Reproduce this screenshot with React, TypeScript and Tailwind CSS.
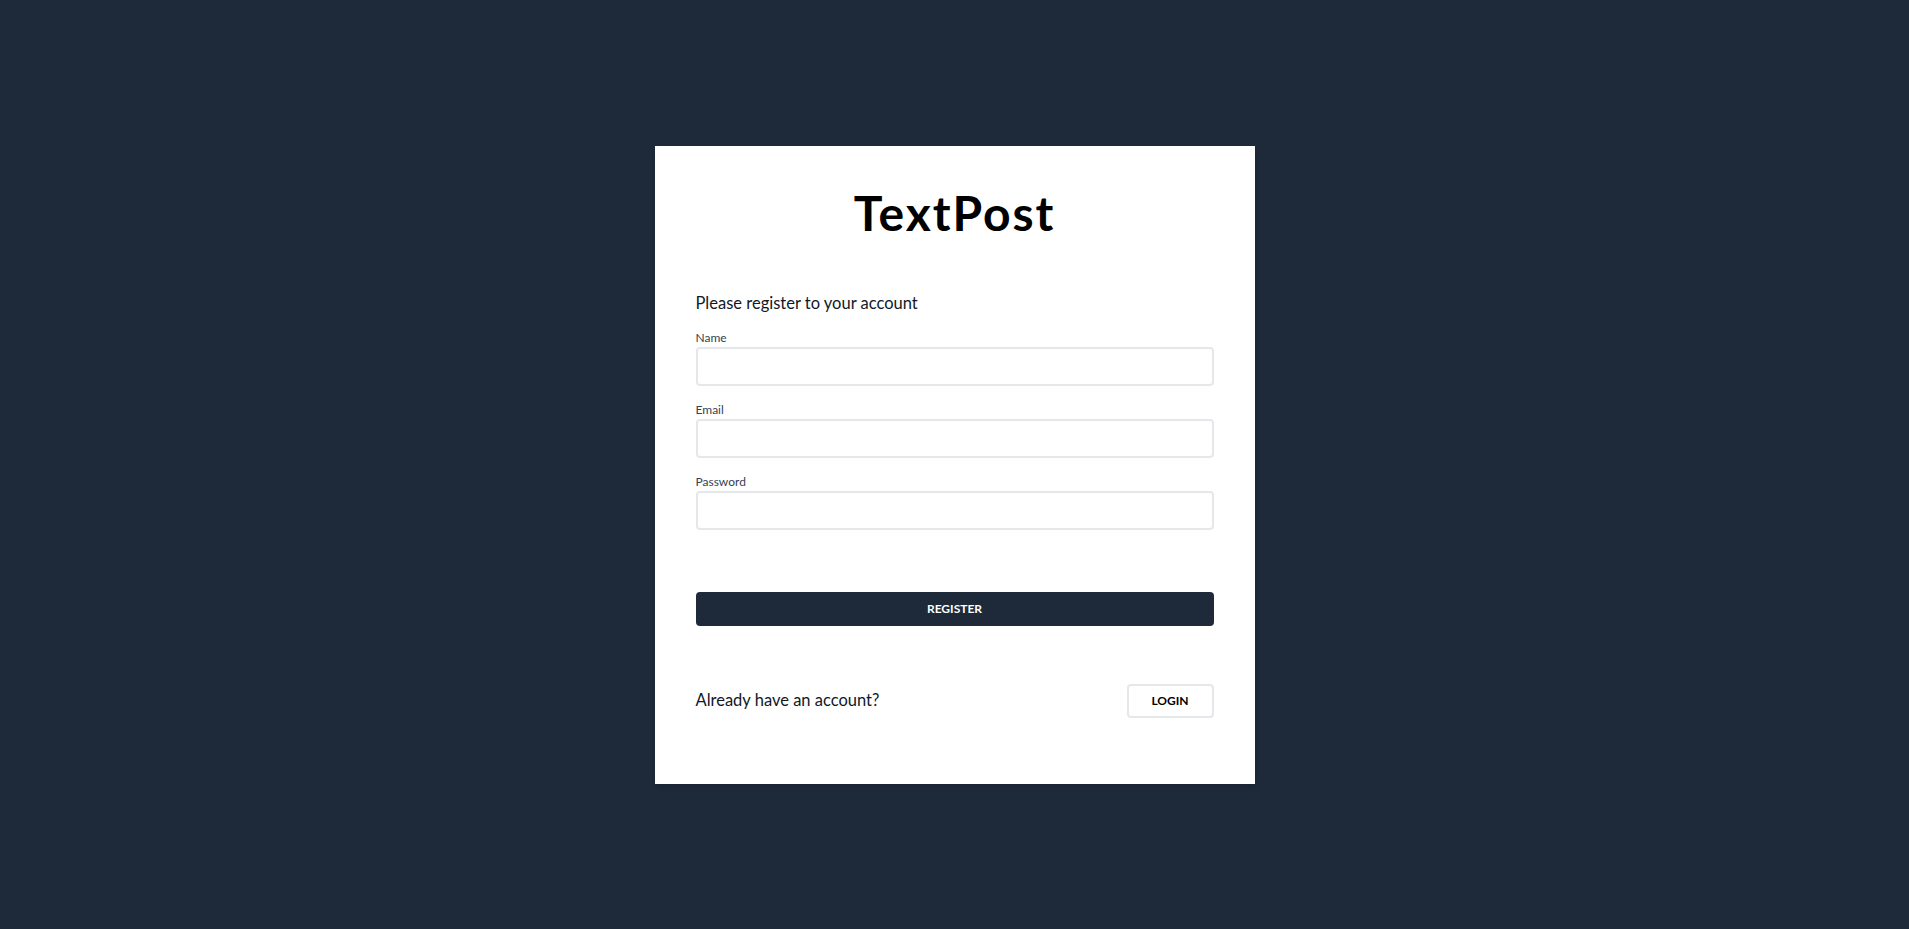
import React from "react";

const font = { fontFamily: "Lato, 'Noto Sans', sans-serif" };

function Field({ label, type = "text" }: { label: string; type?: string }) {
  return (
    <div className="flex flex-col">
      <label className="text-xs leading-4 text-gray-700">{label}</label>
      <input
        type={type}
        className="mt-px h-[39px] w-full rounded border-2 border-gray-200 bg-white px-3 text-sm outline-none"
      />
    </div>
  );
}

export default function App() {
  return (
    <div className="flex min-h-screen items-center justify-center bg-gray-800" style={font}>
      <div className="w-[600px] bg-white px-[41px] pt-10 pb-[66px] shadow-md">
        <h1 className="mt-[3px] text-center text-5xl leading-none font-bold tracking-[0.04em] text-black">
          TextPost
        </h1>
        <p className="mt-[54px] text-[16.5px] leading-6 text-gray-900">Please register to your account</p>
        <form className="mt-[15px] flex flex-col gap-4" onSubmit={(e) => e.preventDefault()}>
          <Field label="Name" />
          <Field label="Email" type="email" />
          <Field label="Password" type="password" />
          <button
            type="submit"
            className="mt-[46px] h-[34px] w-full rounded bg-gray-800 text-xs font-bold uppercase text-white"
          >
            Register
          </button>
        </form>
        <div className="mt-[58px] flex items-center justify-between">
          <span className="text-[16.5px] text-gray-900">Already have an account?</span>
          <button className="h-[34px] w-[87px] rounded border-2 border-gray-200 bg-white text-xs font-bold uppercase text-black">
            Login
          </button>
        </div>
      </div>
    </div>
  );
}
